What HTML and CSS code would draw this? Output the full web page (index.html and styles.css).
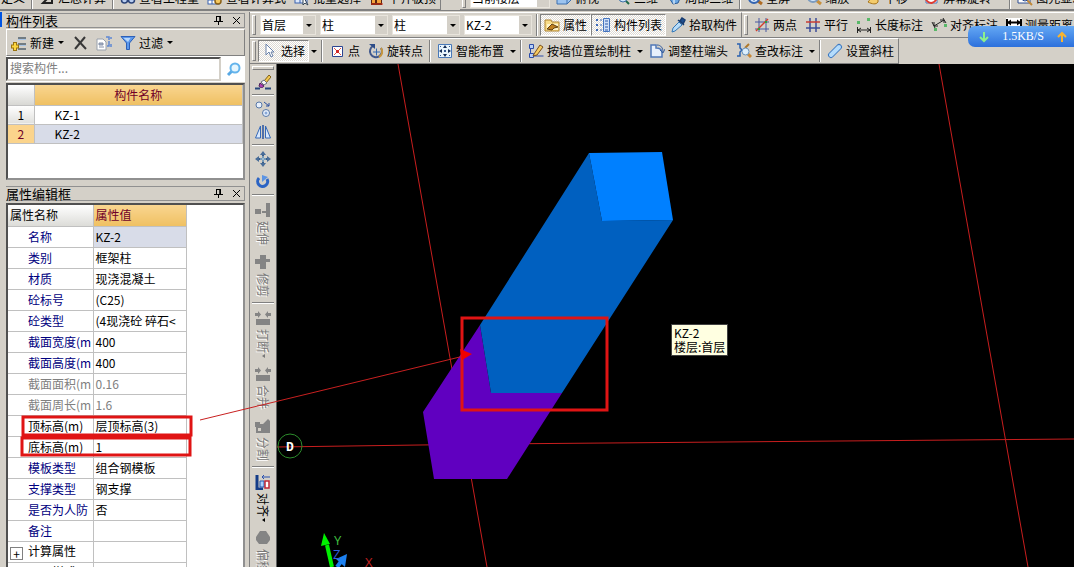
FILE: index.html
```
<!DOCTYPE html>
<html lang="zh-CN">
<head>
    <meta charset="UTF-8">
    <meta name="viewport" content="width=device-width, initial-scale=1.0">
    <title>构件列表</title>
    <link rel="stylesheet" href="styles.css">
</head>
<body>

    <div class="toolbar topbar">
        <div class="bar">
            <button class="btn flush">定义</button>
            <span class="sep"></span>
            <button class="btn"><svg class="icon" viewBox="0 0 16 16"><path d="M13 4H4l5 4-5 5h9v-3" fill="none" stroke="#222" stroke-width="2"/></svg>汇总计算</button>
            <span class="sep"></span>
            <button class="btn"><svg class="icon" viewBox="0 0 16 16"><g fill="#b8cdf0" stroke="#2c4478" stroke-width="1.5"><circle cx="4.500" cy="10" r="3"/><circle cx="11.500" cy="10" r="3"/></g></svg>查看工程量</button>
            <button class="btn"><svg class="icon" viewBox="0 0 16 16"><rect x="1" y="2" width="11" height="12" fill="#fff" stroke="#3a62b0"/><path d="M1 10h10M5 3v11" stroke="#3a62b0"/><circle cx="11" cy="11" r="3" fill="#f5c860" stroke="#8a6018" stroke-width="1.500"/></svg>查看计算式</button>
            <button class="btn"><svg class="icon" viewBox="0 0 16 16"><rect x="1" y="2" width="12" height="11" fill="#dce8fa" stroke="#3a62b0"/><path d="M1 9h12M6 2v11" stroke="#3a62b0"/><path d="M9 6v9l2-2 3 2z" fill="#fff" stroke="#345"/></svg>批量选择</button>
            <button class="btn"><svg class="icon" viewBox="0 0 16 16"><path d="M2 4h11v11H2z" fill="#5a2412"/><path d="M3 10h3v3H3zM8 8h4v5H8z" fill="#f4a43c"/><path d="M2 14h12" stroke="#d83018"/></svg>平齐板顶</button>
        </div>
        <div class="bar grow">
            <span class="grip"></span>
            <label class="combo wide"><select aria-label="楼层范围"><option>当前楼层</option></select></label>
            <button class="btn"><svg class="icon" viewBox="0 0 16 16"><path d="M1 7l5-4h9v7l-4 4H1z" fill="#9cc4f0" stroke="#3c70b0"/><path d="M1 7h10v7M11 7l4-4" fill="none" stroke="#3c70b0"/></svg>俯视</button>
            <button class="btn spaced"><svg class="icon" viewBox="0 0 16 16"><path d="M1 5l6 6M14 14L9 9" stroke="#1f6a4a" stroke-width="2"/><circle cx="8" cy="8" r="4" fill="#cfe6fa" stroke="#4070a8"/></svg>三维</button>
            <button class="btn"><svg class="icon" viewBox="0 0 16 16"><path d="M2 6l6-4 7 4-3 7-5 1z" fill="#6ca8e4" stroke="#2c5c98"/><path d="M2 6l6 3 7-3M8 9v5" fill="none" stroke="#fff"/></svg>局部三维</button>
            <span class="sep"></span>
            <button class="btn"><svg class="icon" viewBox="0 0 16 16"><path d="M11 11l4 3" stroke="#b06c24" stroke-width="3"/><circle cx="7" cy="8" r="5" fill="#d6e8fc" stroke="#3464b0" stroke-width="2"/><path d="M4 8h6M7 5v6" stroke="#3464b0"/></svg>全屏</button>
            <button class="btn spaced"><svg class="icon" viewBox="0 0 16 16"><path d="M10 10l5 4" stroke="#c8903c" stroke-width="3"/><circle cx="7" cy="7" r="5" fill="#d6e8fc" stroke="#7c9cc0" stroke-width="2"/></svg>缩放</button>
            <button class="btn spaced"><svg class="icon" viewBox="0 0 16 16"><path d="M3 12c2-1 2-6 5-8l5 3v5c-2 3-6 2-10 0z" fill="#f4cc6c" stroke="#a87418"/></svg>平移</button>
            <button class="btn spaced"><svg class="icon" viewBox="0 0 16 16"><path d="M2 2h11v11H2z" fill="#fff" stroke="#4878c0"/><path d="M2 10c4 5 9 3 11-2" fill="none" stroke="#e03c30" stroke-width="2"/><path d="M4 8h6" stroke="#ecb02c" stroke-width="2"/></svg>屏幕旋转</button>
            <span class="sep far"></span>
            <button class="btn"><svg class="icon" viewBox="0 0 16 16"><path d="M1 3h12v10H1z" fill="#fff" stroke="#2c4c90"/><path d="M9 9l6 6" stroke="#c08838" stroke-width="2"/><circle cx="8" cy="8" r="3" fill="#cfe0f8" stroke="#2c4c90"/></svg>图元显示设置</button>
        </div>
    </div>

    <div class="main">
        <div class="left">
            <section class="panel">
                <header class="panel-title">
                    <span>构件列表</span>
                    <button class="tiny" aria-label="固定"><svg viewBox="0 0 9 9"><path d="M2 .5h5M2.500 0v5M6 0v5M0 5.500h9M4.500 5v4" fill="none" stroke="#000"/><path d="M5.500 0h1.500v5H5.500z"/></svg></button>
                    <button class="tiny" aria-label="关闭"><svg viewBox="0 0 9 9"><path d="M1 1l7 7M8 1L1 8" stroke="#000"/></svg></button>
                </header>
                <div class="panel-tools">
                    <button class="btn"><svg class="icon" viewBox="0 0 16 16"><path d="M7 3h8M7 9h8M7 14h8" stroke="#51606c" stroke-width="1.500"/><path d="M7 4.500h8M7 10.500h8" stroke="#a8c4e4"/><path d="M4 7v9M0 11.500h8" stroke="#9a7410" stroke-width="4"/><path d="M4 8v7M1 11.500h6" stroke="#fcd640" stroke-width="2"/></svg>新建<i class="arrow"></i></button>
                    <button class="btn" aria-label="删除"><svg class="icon" viewBox="0 0 16 16"><path d="M3 2l11 12M13 2L3 14" stroke="#383838" stroke-width="2"/></svg></button>
                    <button class="btn" aria-label="复制"><svg class="icon" viewBox="0 0 16 16"><path d="M1 4h6l3 3v8H1z" fill="#fff" stroke="#98a0ac"/><path d="M3 8h4v2H3zM3 12h5" fill="#a8b4c8" stroke="#8490a8"/><path d="M10 2h3v3M13 6v5h-2M15 2v2M15 9v3" fill="none" stroke="#5c86d4" stroke-width="1.500"/></svg></button>
                    <button class="btn"><svg class="icon" viewBox="0 0 16 16"><path d="M1 1.500h14L9.500 8v6.500h-3V8z" fill="#5c98ec" stroke="#2c60b8"/><path d="M3.500 3h7L8 7z" fill="#b8d8fc"/></svg>过滤<i class="arrow"></i></button>
                </div>
                <div class="search">
                    <input type="text" placeholder="搜索构件..." aria-label="搜索构件">
                    <button class="find" aria-label="搜索"><svg class="icon" viewBox="0 0 16 16"><path d="M6 10l-4 4" stroke="#58a8e4" stroke-width="3"/><circle cx="9" cy="7" r="4.500" fill="#e6f6fe" stroke="#64b4ec" stroke-width="2"/></svg></button>
                </div>
                <div class="sunken list-box">
                    <table class="list">
                        <thead>
                            <tr><th class="corner"></th><th>构件名称</th></tr>
                        </thead>
                        <tbody>
                            <tr><td class="num">1</td><td>KZ-1</td></tr>
                            <tr class="selected"><td class="num">2</td><td>KZ-2</td></tr>
                        </tbody>
                    </table>
                </div>
            </section>

            <section class="panel props-panel">
                <header class="panel-title">
                    <span>属性编辑框</span>
                    <button class="tiny" aria-label="固定"><svg viewBox="0 0 9 9"><path d="M2 .5h5M2.500 0v5M6 0v5M0 5.500h9M4.500 5v4" fill="none" stroke="#000"/><path d="M5.500 0h1.500v5H5.500z"/></svg></button>
                    <button class="tiny" aria-label="关闭"><svg viewBox="0 0 9 9"><path d="M1 1l7 7M8 1L1 8" stroke="#000"/></svg></button>
                </header>
                <div class="sunken props-box">
                    <table class="props">
                        <thead>
                            <tr><th class="name-head">属性名称</th><th>属性值</th></tr>
                        </thead>
                        <tbody>
                            <tr class="selected"><td>名称</td><td>KZ-2</td></tr>
                            <tr><td>类别</td><td>框架柱</td></tr>
                            <tr><td>材质</td><td>现浇混凝土</td></tr>
                            <tr><td>砼标号</td><td>(C25)</td></tr>
                            <tr><td>砼类型</td><td>(4现浇砼 碎石&lt;</td></tr>
                            <tr><td>截面宽度(m</td><td>400</td></tr>
                            <tr><td>截面高度(m</td><td>400</td></tr>
                            <tr class="readonly"><td>截面面积(m</td><td>0.16</td></tr>
                            <tr class="readonly"><td>截面周长(m</td><td>1.6</td></tr>
                            <tr class="plain"><td>顶标高(m)</td><td>层顶标高(3)</td></tr>
                            <tr class="plain"><td>底标高(m)</td><td>1</td></tr>
                            <tr><td>模板类型</td><td>组合钢模板</td></tr>
                            <tr><td>支撑类型</td><td>钢支撑</td></tr>
                            <tr><td>是否为人防</td><td>否</td></tr>
                            <tr><td>备注</td><td></td></tr>
                            <tr class="group"><td><button class="expand">+</button>计算属性</td><td></td></tr>
                            <tr class="group"><td><button class="expand">+</button>显示样式</td><td></td></tr>
                        </tbody>
                    </table>
                </div>
            </section>
        </div>

        <div class="right">
            <div class="toolbar">
                <div class="bar">
                    <span class="grip"></span>
                    <label class="combo small"><select aria-label="楼层"><option>首层</option></select></label>
                    <label class="combo"><select aria-label="构件类型"><option>柱</option></select></label>
                    <label class="combo"><select aria-label="构件类别"><option>柱</option></select></label>
                    <label class="combo"><select aria-label="构件"><option>KZ-2</option></select></label>
                    <span class="sep"></span>
                    <button class="btn pressed"><svg class="icon" viewBox="0 0 16 16"><path d="M1 3h6l1 2h7v9H1z" fill="#f8dc88" stroke="#b08430"/><path d="M3 7h11v6H3z" fill="#fff4c8"/><path d="M3 12l5-5 6 3-4 1-2 2z" fill="#c08020" stroke="#604010"/></svg>属性</button>
                    <button class="btn pressed"><svg class="icon" viewBox="0 0 16 16"><path d="M1 2h2v2H1zM1 7h2v2H1zM1 12h2v2H1z" fill="#3c68b8"/><path d="M5 3h2M5 8h2M5 13h2" stroke="#3c68b8"/><path d="M8.500 1.500h6v13h-6z" fill="#d0e0f8" stroke="#4474c0"/><path d="M10 4h3M10 7h3M10 10h3M10 13h3" stroke="#2c58a8"/></svg>构件列表</button>
                    <button class="btn"><svg class="icon" viewBox="0 0 16 16"><path d="M9 5l3 3-7 6-3 1 1-4z" fill="#b8dcf8" stroke="#3478b8"/><path d="M8 3l6 5M10 4l2-3 3 2-2 4z" fill="#205090" stroke="#183c70" stroke-width="1.500"/></svg>拾取构件</button>
                </div>
                <div class="bar grow">
                    <span class="grip"></span>
                    <button class="btn"><svg class="icon" viewBox="0 0 16 16"><path d="M5 1v14M12 1v14M1 5h14M1 12h14" stroke="#4858a0"/><path d="M2 14L14 2" stroke="#d04030" stroke-width="1.500"/><path d="M4 11h2v2H4zM11 4h2v2h-2z" fill="#30a040"/></svg>两点</button>
                    <button class="btn"><svg class="icon" viewBox="0 0 16 16"><path d="M5 1v14M11 1v14M1 11h14" stroke="#3c4c98" stroke-width="1.500"/><path d="M1 5h14" stroke="#c83c34" stroke-width="1.500"/></svg>平行</button>
                    <button class="btn"><svg class="icon" viewBox="0 0 16 16"><path d="M1 4h3v3H1zM11 1h3v3h-3z" fill="#58b868"/><path d="M1.500 10v6M14.500 10v6M2 13h12M5 11l-3 2 3 2M11 11l3 2-3 2" fill="none" stroke="#222"/></svg>长度标注</button>
                    <button class="btn"><svg class="icon" viewBox="0 0 16 16"><path d="M1 5l3 6M12 1l3 5M3 9l10-6M3 5v4h4M9 3h4v3" fill="none" stroke="#222"/><path d="M3 11h3v3H3zM13 7h3v3h-3z" fill="#58b868"/></svg>对齐标注</button>
                    <button class="btn"><svg class="icon" viewBox="0 0 16 16"><path d="M0 1h16v12H0z" fill="#fff"/><path d="M1 2v7M15 2v7M1 5.500h14" stroke="#000" stroke-width="2"/><path d="M1 5.500l4-3v6zM15 5.500l-4-3v6z"/></svg>测量距离</button>
                </div>
            </div>

            <div class="toolbar">
                <div class="bar">
                    <span class="grip"></span>
                    <button class="btn pressed"><svg class="icon" viewBox="0 0 16 16"><path d="M4 1v11l3-3 2 5 2-1-2-4h3z" fill="#fff" stroke="#6880a8"/></svg>选择</button><button class="drop" aria-label="选择方式"><i class="arrow"></i></button>
                    <span class="sep"></span>
                    <button class="btn"><svg class="icon" viewBox="0 0 16 16"><path d="M3.500 3.500h10v10h-10z" fill="#fff" stroke="#2c4490"/><path d="M5 5l7 7M12 5l-7 7" stroke="#e05050"/><path d="M7 7h3v3H7z" fill="#d02828"/></svg>点</button>
                    <button class="btn"><svg class="icon" viewBox="0 0 16 16"><path d="M5 3a6 6 0 1 0 8 2" fill="none" stroke="#40588c" stroke-width="2"/><path d="M13 5a6 6 0 0 1-2 9" fill="none" stroke="#c8963c" stroke-width="2"/><path d="M1 1h6v5z" fill="#2c4c88"/><path d="M5 9h7M8.500 5.500v7" stroke="#3468b0"/></svg>旋转点</button>
                    <span class="sep"></span>
                    <button class="btn"><svg class="icon" viewBox="0 0 16 16"><path d="M1.500 1.500h13v13h-13z" fill="#e8f4fc" stroke="#4878b8"/><path d="M8 2l2 3H6zM8 14l2-3H6zM2 8l3-2v4zM14 8l-3-2v4z" fill="#142c54"/><path d="M7 7h2v2H7zM3 3h1v1H3zM12 3h1v1h-1zM3 12h1v1H3zM12 12h1v1h-1z" fill="#345890"/></svg>智能布置</button><button class="drop" aria-label="智能布置方式"><i class="arrow"></i></button>
                    <span class="sep"></span>
                    <button class="btn"><svg class="icon" viewBox="0 0 16 16"><path d="M1.500 1.500h4v4h-4zM1.500 10.500h4v4h-4zM2.500 5v5M5.500 13h10" fill="#b8d0f8" stroke="#2c4ca8"/><path d="M6 11l6-9 3 2-6 8-4 1z" fill="#f8cc60" stroke="#785020"/></svg>按墙位置绘制柱</button><button class="drop" aria-label="绘制方式"><i class="arrow"></i></button>
                    <button class="btn"><svg class="icon" viewBox="0 0 16 16"><path d="M2 2h5v3c4 0 6 2 6 5v4H2z" fill="#e8f0fc" stroke="#5078b8" stroke-width="1.500"/><path d="M8 2c4 0 6 3 6 7M11 7l3 3 2-4" fill="none" stroke="#3860a0"/></svg>调整柱端头</button>
                    <button class="btn"><svg class="icon" viewBox="0 0 16 16"><path d="M1 1h3v4l2 2-2 2v4H1" fill="none" stroke="#2860b0" stroke-width="1.500"/><path d="M13 1L9 5" stroke="#b07828" stroke-width="2"/><path d="M12 11l3 3" stroke="#c88838" stroke-width="3"/><circle cx="9.500" cy="8.500" r="3.500" fill="#dceefc" stroke="#6890b8"/></svg>查改标注</button><button class="drop" aria-label="标注选项"><i class="arrow"></i></button>
                    <span class="sep"></span>
                    <button class="btn"><svg class="icon" viewBox="0 0 16 16"><path d="M4 12l8-8" stroke="#3c78c0" stroke-width="6" stroke-linecap="round"/><path d="M4 12l8-8" stroke="#b4dcfc" stroke-width="4" stroke-linecap="round"/></svg>设置斜柱</button>
                </div>
            </div>

            <div class="work">
                <div class="side">
                    <span class="grip-h"></span>
                    <button class="vbtn" aria-label="格式刷"><svg class="icon" viewBox="0 0 16 16"><path d="M9 7l5-6 2 2-5 6z" fill="#f4c850" stroke="#806018"/><path d="M6 8l3-2 3 3-3 2z" fill="#f8f8f8" stroke="#687080"/><path d="M5 9l4 3c-1 2-4 2-5 0z" fill="#b040b8" stroke="#482058"/><path d="M0 14.500h5M10 14.500h6" stroke="#28487c" stroke-width="2"/></svg></button>
                    <span class="sep-h"></span>
                    <button class="vbtn" aria-label="复制图元"><svg class="icon" viewBox="0 0 16 16"><g fill="#e8f0fc" stroke="#5878a8"><circle cx="4" cy="4" r="3"/><circle cx="11" cy="12" r="3.500"/></g><circle cx="11" cy="12" r="1.500" fill="#88a8d8"/><path d="M9 1l5 4M14 2v3h-3" fill="none" stroke="#2c50a0"/></svg></button>
                    <button class="vbtn" aria-label="镜像"><svg class="icon" viewBox="0 0 16 16"><path d="M5.500 2v12H.5zM10.500 2v12h5z" fill="#d8e8fc" stroke="#3468b8"/><path d="M8 1v14" stroke="#2450a0" stroke-width="1.500"/></svg></button>
                    <span class="sep-h"></span>
                    <button class="vbtn" aria-label="移动"><svg class="icon" viewBox="0 0 16 16"><path d="M8 2v12M2 8h12" stroke="#385c88" stroke-width="2"/><path d="M8 0l3 4H5zM8 16l3-4H5zM0 8l4-3v6zM16 8l-4-3v6z" fill="#486c98"/><path d="M8 5v6M5 8h6" stroke="#b8d8e8"/></svg></button>
                    <button class="vbtn" aria-label="旋转"><svg class="icon" viewBox="0 0 16 16"><path d="M4 4a5 5 0 1 0 8 1" fill="none" stroke="#2c64c4" stroke-width="3"/><path d="M7 1v7l6-5z" fill="#5c94e4"/></svg></button>
                    <span class="sep-h"></span>
                    <button class="vbtn" disabled><svg class="icon" viewBox="0 0 16 16"><path d="M11 1h4v14h-4zM0 7h6v5H0zM7 9h4v2H7z" fill="#848484"/></svg><span>延伸</span></button>
                    <button class="vbtn" disabled><svg class="icon" viewBox="0 0 16 16"><path d="M5 1h6v4h4v3h-4v7H5v-5H0V5h5z" fill="#848484"/></svg><span>修剪</span></button>
                    <span class="sep-h"></span>
                    <button class="vbtn" disabled><svg class="icon" viewBox="0 0 16 16"><path d="M1 9h14v6H1zM0 3h3V1l3 3.500L3 8V6H0zM16 3h-3V1l-3 3.500L13 8V6h3z" fill="#848484"/></svg><span>打断</span><i class="arrow-l"></i></button>
                    <button class="vbtn" disabled><svg class="icon" viewBox="0 0 16 16"><path d="M1 9h14v6H1zM0 3h3V1l3 3.500L3 8V6H0zM16 3h-3V1l-3 3.500L13 8V6h3z" fill="#848484"/></svg><span>合并</span></button>
                    <button class="vbtn" disabled><svg class="icon" viewBox="0 0 16 16"><path d="M0 4h5v2h3l5-5 2 2v12H1V9H0z" fill="#848484"/><path d="M3 10h3v3H3z" fill="#d4d0c8"/></svg><span>分割</span></button>
                    <span class="sep-h"></span>
                    <button class="vbtn"><svg class="icon" viewBox="0 0 16 16"><path d="M2 1v14h6" fill="none" stroke="#143c88" stroke-width="3"/><path d="M5 7h4v6H5z" fill="#a8d0fc" stroke="#2858b0"/><path d="M10 7h4v7h-4z" fill="#fff" stroke="#c02838" stroke-width="1.500"/><path d="M7 3h8M9 1L7 3l2 2" fill="none" stroke="#2850b0"/></svg><span>对齐</span><i class="arrow-l"></i></button>
                    <button class="vbtn" disabled><svg class="icon" viewBox="0 0 16 16"><path d="M5 1h6l4 6v3l-3 4H4l-3-4V7z" fill="#848484"/></svg><span>偏移</span></button>
                </div>
                <div class="canvas">
                    <svg class="scene">
                        <!-- axis grid -->
                        <g stroke="#c81e1e" fill="none">
                            <path d="M121 0L210 503M662 0L751 503M0 383L214 380L797 375"/>
                        </g>
                        <!-- column: lower part, side, top -->
                        <path d="M203 261L146 348L157 415H230L285 329H214z" fill="#6000c0"/>
                        <path d="M312 89L325 157L396 156L285 329H214L203 261z" fill="#0060c0"/>
                        <path d="M312 89L385 88L396 156L325 157z" fill="#0080ff"/>
                        <circle cx="13" cy="382" r="12" fill="none" stroke="#2c8c2c"/>
                        <text class="axis-name" x="9" y="387">D</text>
                        <!-- coordinate axes -->
                        <path d="M55 503L50 481" stroke="#00f000" stroke-width="4"/>
                        <path d="M47 469L44 482L53 480z" fill="#00f000"/>
                        <path d="M60 503L66 495" stroke="#1c80f0" stroke-width="4"/>
                        <path d="M70 490L59 495L68 503z" fill="#1c80f0"/>
                        <text class="axis" x="57" y="481" fill="#40c040">Y</text>
                        <text class="axis" x="56" y="495" fill="#3060e0">Z</text>
                        <text class="axis" x="88" y="503" fill="#c02020">X</text>
                    </svg>
                    <div class="tip">KZ-2<br>楼层:首层</div>
                </div>
            </div>
        </div>
    </div>

    <svg class="marks">
        <g fill="none" stroke="#e01414" stroke-width="3">
            <path d="M23 417H191V435H23zM22 438H190V455H22zM462 318H607V410H462z"/>
        </g>
        <path d="M200 420L464 356" stroke="#c82020"/>
        <path d="M472 354L460 349L462 360z" fill="#f00000"/>
    </svg>

    <div class="speed">
        <svg class="icon" viewBox="0 0 16 16"><path d="M8 3v9M4 8l4 4 4-4" fill="none" stroke="#8cf08c" stroke-width="2"/></svg>
        <span>1.5KB/S</span>
        <svg class="icon" viewBox="0 0 16 16"><path d="M8 13V4M4 8l4-4 4 4" fill="none" stroke="#f8b430" stroke-width="2"/></svg>
    </div>

</body>
</html>
```
FILE: styles.css
```
* {
    box-sizing: border-box;
}

body {
    margin: 0;
    height: 100vh;
    display: flex;
    flex-direction: column;
    overflow: hidden;
    position: relative;
    background: #d4d0c8;
    color: #000;
    font: 12px/16px "Noto Sans CJK SC", sans-serif;
}

button, input, select {
    font: inherit;
    color: inherit;
}

button {
    border: 0;
    padding: 0;
    background: none;
    white-space: nowrap;
}

.icon {
    width: 16px;
    height: 16px;
    flex: none;
}

/* toolbars */
.toolbar {
    display: flex;
    height: 26px;
    flex: none;
    overflow: hidden;
}

.topbar {
    height: 11px;
    align-items: flex-end;
    border-bottom: 1px solid #808080;
    gap: 19px;
}

.bar {
    display: flex;
    align-items: center;
    flex: none;
    height: 26px;
    border-top: 1px solid #fff;
    border-right: 1px solid #808080;
    border-bottom: 1px solid #808080;
}

.topbar .bar {
    height: 24px;
}

.grow {
    flex: 1 0 auto;
}

.btn {
    display: flex;
    align-items: center;
    gap: 3px;
    height: 22px;
    padding: 0 4px;
}

.flush {
    padding-left: 1px;
}

.spaced {
    margin-left: 8px;
}

.pressed {
    background: repeating-conic-gradient(#fff 0 25%, #dedad4 0 50%) 0 0 / 2px 2px;
    border: 1px solid;
    border-color: #808080 #fff #fff #808080;
    padding: 0 3px;
}

.drop {
    width: 10px;
    height: 22px;
    display: flex;
    align-items: center;
    justify-content: center;
}

.arrow {
    border: 3px solid transparent;
    border-top-color: #000;
    border-bottom: 0;
}

.sep {
    width: 2px;
    height: 22px;
    margin: 0 2px;
    border-left: 1px solid #808080;
    border-right: 1px solid #fff;
}

.far {
    margin-left: 14px;
}

.grip {
    width: 4px;
    height: 20px;
    margin: 0 2px;
    border: 1px solid;
    border-color: #fff #808080 #808080 #fff;
}

.combo {
    position: relative;
    width: 68px;
    margin: 0 2px;
    height: 20px;
    background: #fff;
    border: 1px solid #e8e4dc;
}

.combo select {
    appearance: none;
    display: block;
    width: 100%;
    height: 18px;
    padding: 0 0 0 1px;
    border: 0;
    background: linear-gradient(#d4d0c8, #d4d0c8) right / 12px 100% no-repeat;
    line-height: 16px;
}

.combo::after {
    content: "";
    position: absolute;
    right: 3px;
    top: 8px;
    border: 3px solid transparent;
    border-top-color: #000;
    border-bottom: 0;
}

.small {
    width: 56px;
}

.wide {
    width: 80px;
}

/* layout */
.main {
    flex: 1;
    display: flex;
    min-height: 0;
    padding-top: 1px;
}

.left {
    width: 250px;
    flex: none;
    display: flex;
    flex-direction: column;
    gap: 6px;
    padding: 1px 4px 0 6px;
    background: linear-gradient(#0054e3, #0054e3) 0 0 / 2px 15px no-repeat;
    border-right: 1px solid #808080;
}

.right {
    flex: 1;
    min-width: 0;
    display: flex;
    flex-direction: column;
}

/* left panels */
.panel {
    display: flex;
    flex-direction: column;
}

.props-panel {
    flex: 1;
    min-height: 0;
}

.panel-title {
    display: flex;
    align-items: center;
    height: 15px;
    flex: none;
    padding-right: 3px;
    gap: 9px;
    border: 1px solid #909090;
    border-left: 0;
    font-size: 13px;
    line-height: 13px;
}

.panel-title span {
    flex: 1;
}

.tiny {
    display: flex;
}

.tiny svg {
    width: 9px;
    height: 9px;
}

.panel-tools {
    display: flex;
    align-items: center;
    height: 27px;
    margin-top: 1px;
    border: 1px solid;
    border-color: #fff #808080 #808080 #fff;
}

.panel-tools .arrow {
    margin-left: 1px;
}

.search {
    display: flex;
    height: 26px;
    background: #fff;
}

.search input {
    flex: 1;
    min-width: 0;
    height: 24px;
    margin-top: 1px;
    padding: 0 2px 4px;
    border: 2px solid;
    border-color: #505050 #d4d0c8 #d4d0c8 #505050;
    outline: 0;
}

.search input::placeholder {
    color: #808080;
    opacity: 1;
}

.find {
    display: flex;
    align-items: center;
    padding: 0 3px 0 5px;
}

.sunken {
    background: #fff;
    border: 2px solid;
    border-color: #505050 #909090 #909090 #505050;
}

.list-box {
    height: 97px;
    margin-top: 1px;
}

table {
    border-collapse: collapse;
    table-layout: fixed;
}

th {
    background: linear-gradient(#f9d590, #efc062);
    color: #700028;
    font-weight: normal;
}

th, td {
    border-right: 1px solid #c0c0c0;
    border-bottom: 1px solid #c0c0c0;
    padding: 0;
    white-space: nowrap;
    overflow: hidden;
    line-height: 16px;
}

.list {
    width: 100%;
}

.list th {
    height: 20px;
}

.list td {
    height: 19px;
    padding-left: 20px;
}

.list .corner {
    width: 26px;
    background: linear-gradient(#fff, #d8d8d4);
}

.list .num {
    padding: 0;
    text-align: center;
    background: linear-gradient(#fff, #e0e0dc);
}

.selected td {
    background: #d8dce8;
}

.list .selected .num {
    background: #fbd48c;
    color: #700028;
}

.props-box {
    flex: 1;
    min-height: 0;
    margin-top: 2px;
    overflow: hidden;
    border-bottom: 0;
}

.props {
    width: 179px;
}

.props th, .props td {
    height: 21px;
}

.props th {
    text-align: left;
    padding-left: 2px;
}

.props .name-head {
    width: 85px;
    background: linear-gradient(#fff, #dcdcd8);
    color: #000;
}

.props td {
    padding-left: 2px;
}

.props td:first-child {
    padding-left: 20px;
    background: #fff;
    color: #000080;
}

.props .readonly td, .props .readonly td:first-child {
    color: #808080;
}

.props .plain td:first-child {
    color: #000;
}

.props .group td:first-child {
    padding-left: 2px;
    color: #000;
}

.expand {
    width: 13px;
    height: 13px;
    margin-right: 5px;
    border: 1px solid #808080;
    line-height: 9px;
    vertical-align: middle;
}

/* drawing area */
.work {
    flex: 1;
    min-height: 0;
    display: flex;
}

.side {
    width: 27px;
    flex: none;
    display: flex;
    flex-direction: column;
    gap: 1px;
    padding: 2px 2px 0;
    overflow: hidden;
    border-right: 1px solid #606060;
}

.grip-h {
    height: 4px;
    flex: none;
    border: 1px solid;
    border-color: #fff #808080 #808080 #fff;
}

.sep-h {
    height: 2px;
    flex: none;
    margin-bottom: 1px;
    border-top: 1px solid #808080;
    border-bottom: 1px solid #fff;
}

.vbtn {
    display: flex;
    flex-direction: column;
    align-items: center;
    flex: none;
    padding: 3px 0;
}

.vbtn span {
    writing-mode: vertical-rl;
    text-orientation: sideways;
    margin: 3px 0 1px;
}

.vbtn:has(span) {
    padding-top: 4px;
}

.vbtn:disabled {
    color: #787878;
    text-shadow: 1px 1px #fff;
}

.arrow-l {
    border: 2px solid transparent;
    border-right: 3px solid;
    border-left: 0;
}

.canvas {
    flex: 1;
    min-width: 0;
    position: relative;
    background: #000;
    overflow: hidden;
}

.scene {
    display: block;
    width: 100%;
    height: 100%;
}

.axis {
    font: 13px "Open Sans", sans-serif;
}

.axis-name {
    font: bold 13px "Liberation Mono", monospace;
    fill: #fff;
}

.tip {
    position: absolute;
    left: 394px;
    top: 260px;
    padding: 1px 2px;
    background: #ffffe1;
    border: 1px solid #404040;
    line-height: 14px;
}

/* red notes drawn over the window */
.marks {
    position: absolute;
    left: 0;
    top: 0;
    width: 100%;
    height: 100%;
    pointer-events: none;
}

.speed {
    position: absolute;
    right: 0;
    top: 26px;
    width: 106px;
    height: 21px;
    display: flex;
    align-items: center;
    justify-content: space-between;
    padding: 0 4px 0 8px;
    border-radius: 7px 0 0 7px;
    background: linear-gradient(#64a8f4, #2c70dc);
    color: #fff;
    font: 12px "Liberation Serif", serif;
}
```
